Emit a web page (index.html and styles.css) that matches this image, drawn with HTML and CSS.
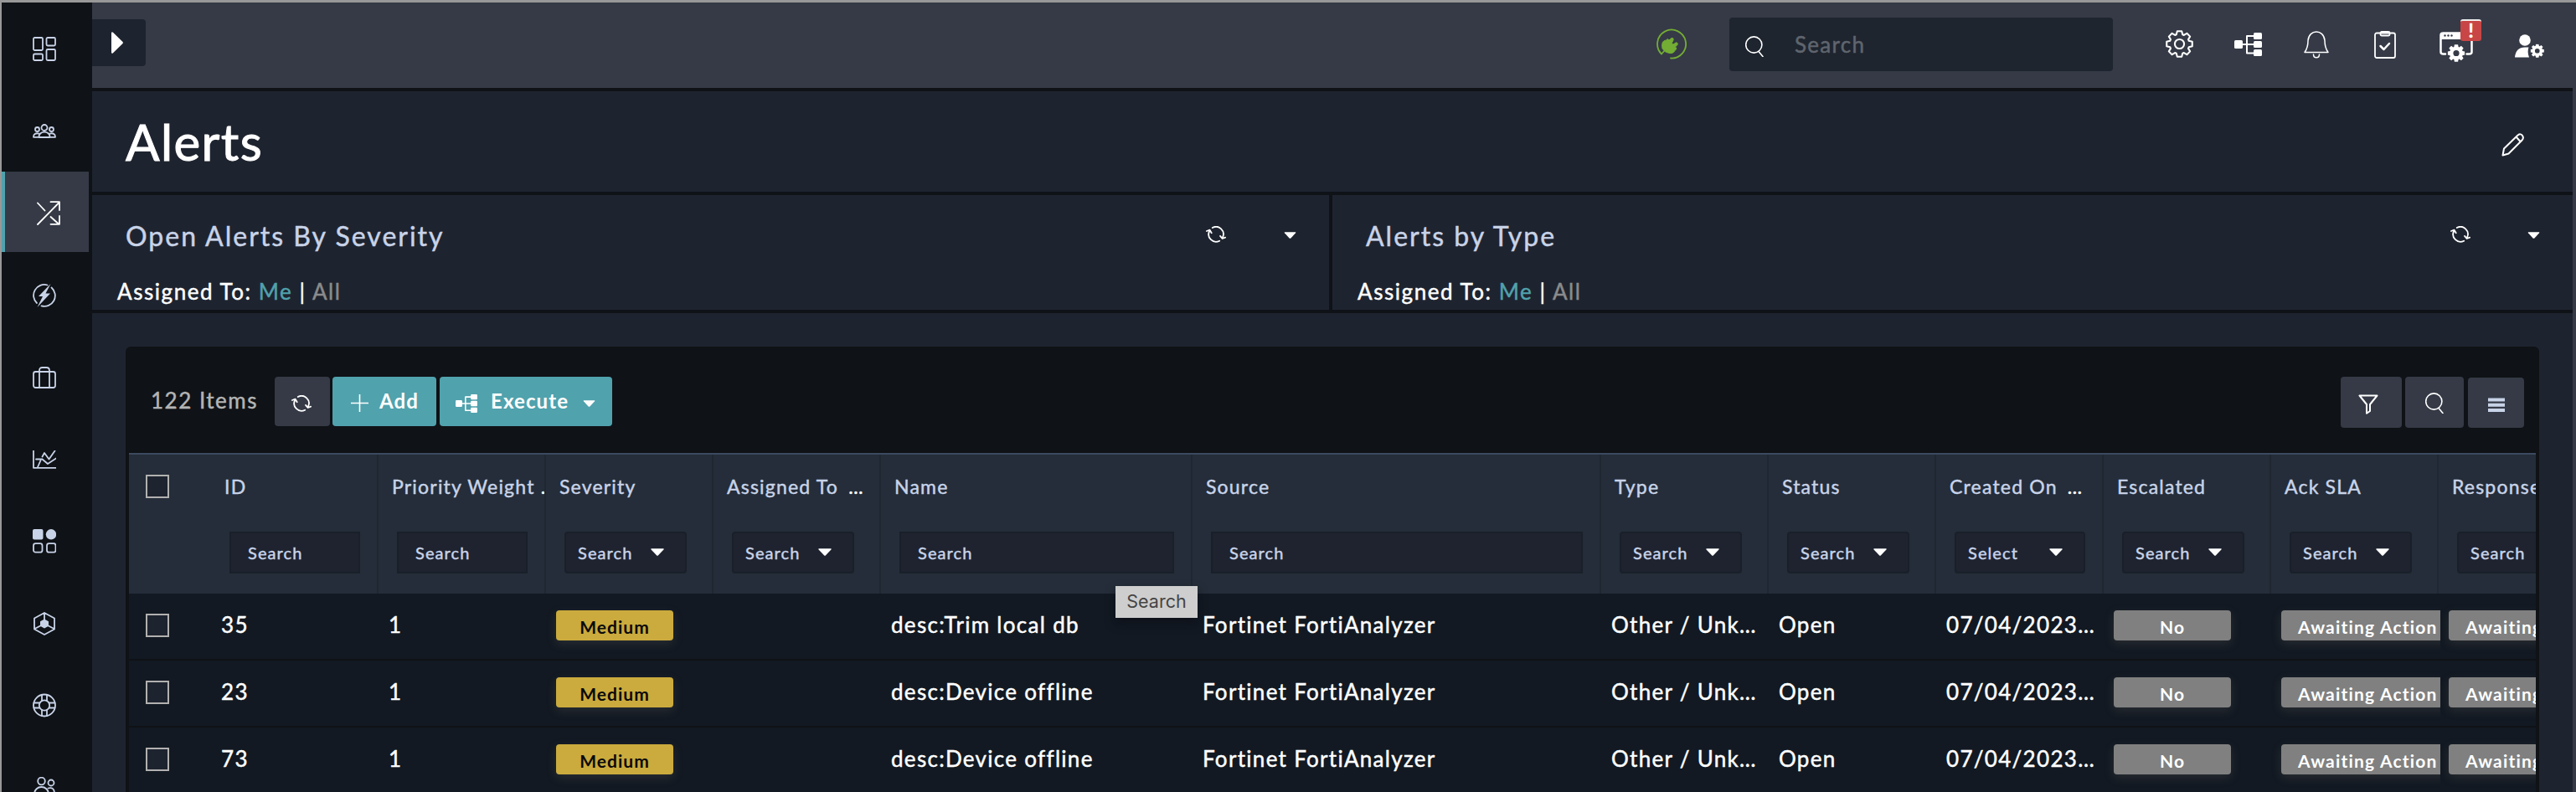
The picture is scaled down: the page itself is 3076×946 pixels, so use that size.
FILE: index.html
```html
<!DOCTYPE html>
<html lang="en">
<head>
<meta charset="utf-8">
<title>Alerts</title>
<link rel="stylesheet" href="styles.css">
</head>
<body>
<svg class="defs" width="0" height="0">
  <symbol id="gear" viewBox="-16 -16 32 32"><path d="M2.6-14.8 3.6-10.9 5.2-10.2 8.6-12.3 12.3-8.6 10.2-5.2 10.9-3.6 14.8-2.6V2.6L10.9 3.6 10.2 5.2 12.3 8.6 8.6 12.3 5.2 10.2 3.6 10.9 2.6 14.8H-2.6L-3.6 10.9-5.2 10.2-8.6 12.3-12.3 8.6-10.2 5.2-10.9 3.6-14.8 2.6V-2.6L-10.9-3.6-10.2-5.2-12.3-8.6-8.6-12.3-5.2-10.2-3.6-10.9-2.6-14.8Z"/><circle r="5.4"/></symbol>
  <symbol id="cog" viewBox="-16 -16 32 32"><path fill-rule="evenodd" d="M3.2-15.6 4-11.4 5.6-10.8 9-13.2 13.2-9 10.8-5.6 11.4-4 15.6-3.2V3.2L11.4 4 10.8 5.6 13.2 9 9 13.2 5.6 10.8 4 11.4 3.2 15.6H-3.2L-4 11.4-5.6 10.8-9 13.2-13.2 9-10.8 5.6-11.4 4-15.6 3.2V-3.2L-11.4-4-10.8-5.6-13.2-9-9-13.2-5.6-10.8-4-11.4-3.2-15.6ZM5.5 0A5.5 5.5 0 1 0-5.5 0 5.5 5.5 0 1 0 5.5 0Z"/></symbol>
  <symbol id="refresh" viewBox="0 0 24 20"><path d="M7.800 2A8.800 8.800 0 0 1 20 13.500M16.200 17.700A8.800 8.800 0 0 1 4.200 6M.9 6 4.600 4.600 6.700 8.200M23.100 13.600 19.600 15 17 11.900"/></symbol>
  <symbol id="tree" viewBox="0 0 33 28"><g fill="currentColor" stroke="none"><rect y="9" width="10" height="10" rx="1.5"/><rect x="23" width="10" height="8" rx="1.5"/><rect x="23" y="10" width="10" height="8" rx="1.5"/><rect x="23" y="20" width="10" height="8" rx="1.5"/></g><path d="M9 14H24M24 4H15V24.500H24"/></symbol>
  <symbol id="glass" viewBox="0 0 22 25"><circle cx="10.300" cy="10.500" r="9.600"/><path d="M16 18.500 21 24.500"/></symbol>
  <symbol id="caret" viewBox="0 0 16 9"><path d="M1 .2H15Q16.300.3 15.400 1.400L9 8.300Q8 9.300 7 8.300L.6 1.400Q-.3.3 1 .2Z"/></symbol>
</svg>
<div class="app">
  <nav class="sidebar">
    <a class="nav"><svg width="28" height="29"><rect x="1" y="1" width="11" height="15" rx="1.500"/><rect x="1" y="20.500" width="11" height="7.500" rx="1.500"/><rect x="16.500" y="1" width="10.500" height="9.500" rx="1.500"/><rect x="16.500" y="15" width="10.500" height="13" rx="1.500"/></svg></a>
    <a class="nav"><svg width="28" height="17"><circle cx="14" cy="4.500" r="3.500"/><circle cx="5.500" cy="6.500" r="2.500"/><circle cx="22.500" cy="6.500" r="2.500"/><path d="M7.500 16C7 7.500 21 7.500 20.500 16ZM7.500 15.800H1C.8 12 4 10.600 7.500 11.600M20.500 15.800H27C27.200 12 24 10.600 20.500 11.600"/></svg></a>
    <a class="nav active"><svg width="28" height="29"><path d="M1 28 27 1.500M16.500 1.200H27V11M1 2.500 9.500 11.500M16.500 19 26 27.500M27 18V27.800H16.500"/></svg></a>
    <a class="nav"><svg width="28" height="28"><path d="M17.500 1.500A12.800 12.800 0 0 0 5 23M10.500 26.400A12.800 12.800 0 0 0 22.500 4.500"/><path class="fill" d="M21.500 0 7 15H12L5.500 28 21 11.500H15.500Z"/></svg></a>
    <a class="nav"><svg width="28" height="26"><rect x="1" y="6" width="26" height="19" rx="2.500"/><path d="M8 25V4.500Q8 1 11.500 1H16.500Q20 1 20 4.500V25"/></svg></a>
    <a class="nav"><svg width="28" height="22"><path d="M1 0V20.800H28M4 10.500H11.500L18 16 28 9.500M6 20 9.500 12M11.500 7.500 14 3 19.500 10.500 26.500.5"/></svg></a>
    <a class="nav"><svg width="28" height="29"><rect class="fill" width="12.500" height="12.500" rx="2"/><circle class="fill" cx="22" cy="6.300" r="6.200"/><rect x="1" y="17.200" width="10.500" height="10.500" rx="2.500"/><rect x="17" y="17.200" width="10.500" height="10.500" rx="2.500"/></svg></a>
    <a class="nav"><svg width="26" height="28"><path d="M13 1 25 7.500V20.500L13 27 1 20.500V7.500ZM13 1V13M1.500 20 12 14.500M24.500 20 14 14.500"/><path class="fill" d="M13 8.500 18 11.200V16.800L13 19.500 8 16.800V11.200Z"/></svg></a>
    <a class="nav"><svg width="28" height="29"><circle cx="14" cy="14.500" r="13"/><circle cx="14" cy="14.500" r="6.200"/><path d="M11 2V9M17 2V9M11 20V27M17 20V27M1.500 11.500H8.500M1.500 17.500H8.500M19.500 11.500H26.500M19.500 17.500H26.500"/></svg></a>
    <a class="nav"><svg width="26" height="22"><circle cx="9.500" cy="5" r="4.300"/><circle cx="21" cy="7" r="3.500"/><path d="M1 21C1 9 18 9 18 21M17.500 13.500Q25 11.500 25 20"/></svg></a>
  </nav>
  <div class="main">
    <header class="topbar">
      <button class="toggle"><svg width="14" height="26"><path d="M0 1.500Q.3-.5 2 .8L13.500 12Q14.300 13 13.500 14L2 25.200Q.3 26.500 0 24.500Z"/></svg></button>
      <svg class="plug" width="37" height="37"><path d="M18 35.500A17 17 0 1 0 7 30.500L11 26"/><path class="leaf" d="M8 24Q6 14 13 14L14 12.500 16 14 19 11.500Q22 11 21 14L19 18 21 19 24.500 16.800Q27 17 26 19.500L23.500 22 25 24 23 26.500Q20 32 12 28Z"/></svg>
      <label class="search"><svg width="22" height="25"><use href="#glass"/></svg><span>Search</span></label>
      <div class="tools">
        <svg class="t-gear" width="33" height="33"><use href="#gear"/></svg>
        <svg class="t-tree" width="33" height="28"><use href="#tree"/></svg>
        <svg class="t-bell" width="30" height="33"><path d="M1 25.500Q5 20 5 11.500C6-2.500 24-2.500 25 11.500Q25 20 29 25.500ZM11.500 28C11.500 33 18.500 33 18.500 28"/></svg>
        <svg class="t-clip" width="26" height="33"><rect x="1" y="2.500" width="24" height="29.500" rx="2"/><rect x="7.500" y="1" width="11" height="4.500" rx="1.500"/><path class="tick" d="M7.500 18 11.500 22 18 15"/></svg>
        <span class="t-win"><svg width="40" height="36"><path class="frame" d="M7 26.500H4.500Q1.500 26.500 1.500 24V4Q1.500 1.500 4.500 1.500H38.500V24Q38.500 26.500 35.500 26.500H32.500"/><path class="solid" d="M1 1H39V9H1Z"/><g class="dots"><circle cx="6.500" cy="4.500" r="1.200"/><circle cx="10.500" cy="4.500" r="1.200"/><circle cx="14.500" cy="4.500" r="1.200"/></g><use class="solid" href="#cog" x="9.500" y="15" width="21" height="21"/></svg><b class="alert">!</b></span>
        <svg class="t-user" width="35" height="28"><circle class="solid" cx="12" cy="7" r="6.800"/><path class="solid" d="M0 27.500Q1 15.500 12 15.500H16.500Q14.500 21 17 27.500Z"/><use class="solid" href="#cog" x="18.500" y="11.500" width="16.500" height="16.500"/></svg>
      </div>
    </header>
    <section class="title"><h1>Alerts</h1><svg width="27" height="28"><path d="M1.500 26.500 3 18.500 19.500 2.500Q23 0 25 3T24.500 8.500L8.500 24.500ZM17.500 4.500 22.500 10"/></svg></section>
    <section class="widgets">
      <article class="widget">
        <div class="whead"><h2>Open Alerts By Severity</h2><svg class="line" width="24" height="20"><use href="#refresh"/></svg><svg class="wcaret" width="15" height="8"><use href="#caret"/></svg></div>
        <p>Assigned To: <a class="me">Me</a> | <a class="all">All</a></p>
      </article>
      <article class="widget">
        <div class="whead"><h2>Alerts by Type</h2><svg class="line" width="24" height="20"><use href="#refresh"/></svg><svg class="wcaret" width="15" height="8"><use href="#caret"/></svg></div>
        <p>Assigned To: <a class="me">Me</a> | <a class="all">All</a></p>
      </article>
    </section>
    <section class="panel">
      <div class="bar">
        <span class="count">122 Items</span>
        <button class="btn reload"><svg class="line" width="24" height="20"><use href="#refresh"/></svg></button>
        <button class="btn add"><svg width="21" height="21"><path d="M10.500 0V21M0 10.500H21"/></svg>Add</button>
        <button class="btn exec"><svg width="26" height="22"><use href="#tree"/></svg>Execute<svg class="solid" width="15" height="8"><use href="#caret"/></svg></button>
        <button class="btn sq filter"><svg width="24" height="24"><path d="M1.500 1.500H22.500L14 12V20L10 22.800V12Z"/></svg></button>
        <button class="btn sq find"><svg width="22" height="25"><use href="#glass"/></svg></button>
        <button class="btn sq menu"><svg width="20" height="18"><path d="M0 2.500H20M0 8.800H20M0 15H20"/></svg></button>
      </div>
      <div class="table">
        <div class="row head">
          <div><i class="check"></i></div>
          <div><h3>ID</h3><span class="input">Search</span></div>
          <div><h3>Priority Weight <em>.</em></h3><span class="input">Search</span></div>
          <div><h3>Severity</h3><span class="select">Search<svg width="16" height="9"><use href="#caret"/></svg></span></div>
          <div><h3>Assigned To <em class="more">…</em></h3><span class="select">Search<svg width="16" height="9"><use href="#caret"/></svg></span></div>
          <div><h3>Name</h3><span class="input">Search</span></div>
          <div><h3>Source</h3><span class="input">Search</span></div>
          <div><h3>Type</h3><span class="select">Search<svg width="16" height="9"><use href="#caret"/></svg></span></div>
          <div><h3>Status</h3><span class="select">Search<svg width="16" height="9"><use href="#caret"/></svg></span></div>
          <div><h3>Created On <em class="more">…</em></h3><span class="select wide">Select<svg width="16" height="9"><use href="#caret"/></svg></span></div>
          <div><h3>Escalated</h3><span class="select">Search<svg width="16" height="9"><use href="#caret"/></svg></span></div>
          <div><h3>Ack SLA</h3><span class="select">Search<svg width="16" height="9"><use href="#caret"/></svg></span></div>
          <div><h3>Response</h3><span class="select">Search<svg width="16" height="9"><use href="#caret"/></svg></span></div>
        </div>
        <div class="row"><div><i class="check"></i></div><div>35</div><div>1</div><div><b class="tag medium">Medium</b></div><div></div><div>desc:Trim local db</div><div>Fortinet FortiAnalyzer</div><div>Other / Unk…</div><div>Open</div><div>07/04/2023…</div><div><b class="tag">No</b></div><div><b class="tag">Awaiting Action</b></div><div><b class="tag">Awaiting Action</b></div></div>
        <div class="row"><div><i class="check"></i></div><div>23</div><div>1</div><div><b class="tag medium">Medium</b></div><div></div><div>desc:Device offline</div><div>Fortinet FortiAnalyzer</div><div>Other / Unk…</div><div>Open</div><div>07/04/2023…</div><div><b class="tag">No</b></div><div><b class="tag">Awaiting Action</b></div><div><b class="tag">Awaiting Action</b></div></div>
        <div class="row"><div><i class="check"></i></div><div>73</div><div>1</div><div><b class="tag medium">Medium</b></div><div></div><div>desc:Device offline</div><div>Fortinet FortiAnalyzer</div><div>Other / Unk…</div><div>Open</div><div>07/04/2023…</div><div><b class="tag">No</b></div><div><b class="tag">Awaiting Action</b></div><div><b class="tag">Awaiting Action</b></div></div>
      </div>
    </section>
  </div>
  <div class="tooltip">Search</div>
</div>
</body>
</html>
```
FILE: styles.css
```css
* { box-sizing: border-box; }
body { margin: 0; background: #1e242f; font-family: Lato, sans-serif; letter-spacing: 1.3px; -webkit-text-stroke: .45px currentColor; color: #fff; overflow: hidden; }
h1, h2, h3, p { margin: 0; font-weight: 400; }
em, i { font-style: normal; }
button { border: 0; padding: 0; font: inherit; letter-spacing: inherit; color: inherit; }
svg { display: block; flex: none; fill: none; stroke: currentColor; stroke-width: 2; stroke-linecap: round; stroke-linejoin: round; }
.defs { position: absolute; }
.solid { fill: currentColor; stroke: none; }

.app { position: relative; display: flex; height: 946px; border-top: 3px solid #989898; border-left: 2px solid #989898; overflow: hidden; }
.sidebar { width: 108px; flex: none; background: #0f1216; padding-top: 6px; color: #c8d3e8; }
.nav { display: flex; align-items: center; justify-content: center; width: 104px; height: 96px; margin-bottom: 2px; padding: 3px 2px 0 0; }
.nav svg { stroke-width: 1.800; }
.nav .fill { fill: currentColor; stroke: none; }
.nav.active { background: #353a46; border-left: 4px solid #50a2ad; color: #fff; padding: 3px 0 0 4px; }
.nav:last-child { padding-top: 0; }

.main { flex: 1; min-width: 0; border-right: 4px solid #353a46; display: flex; flex-direction: column; }
.topbar { height: 106px; flex: none; background: #353a46; border-bottom: 4px solid #0f1216; display: flex; }
.toggle { width: 64px; height: 56px; margin-top: 20px; padding-left: 23px; background: #1e242f; border-radius: 0 4px 4px 0; display: flex; align-items: center; }
.toggle svg { fill: #fff; stroke: none; margin-top: -1px; }
.plug { margin: 31px 51px 0 auto; color: #73ad34; stroke-width: 1.800; }
.leaf { fill: #73ad34; stroke-width: 1; }
.search { width: 458px; height: 64px; margin-top: 18px; background: #1e252f; border-radius: 4px; display: flex; align-items: center; padding-left: 19px; gap: 37px; font-size: 26px; }
.search span { color: #60656e; }
.search svg { stroke-width: 1.600; margin-top: 4px; }
.tools { display: flex; width: 549px; padding-left: 63px; }
.tools > * { flex: none; }
.t-gear { margin: 33px 49px 0 0; }
.t-tree { margin: 36px 50px 0 0; }
.t-bell { margin: 34px 54px 0 0; stroke-width: 1.500; }
.t-clip { margin: 34px 52px 0 0; stroke-width: 1.800; }
.tick { stroke-width: 2.500; }
.t-win { position: relative; width: 40px; margin: 35px 50px 0 0; }
.frame { stroke-width: 2.500; }
.dots { fill: #353a46; stroke: none; }
.alert { position: absolute; left: 25px; top: -15px; width: 25px; height: 26px; background: #c84645; border-top: 2px solid #eee; border-radius: 3px; font-size: 22px; line-height: 23px; text-align: center; letter-spacing: 0; }
.t-user { margin-top: 38px; }

.title { height: 124px; flex: none; padding: 0 58px 0 40px; border-bottom: 4px solid #0f1216; display: flex; align-items: center; justify-content: space-between; }
.title h1 { font-size: 60px; line-height: 72px; letter-spacing: 1.400px; -webkit-text-stroke-width: 1px; }
.title svg { margin-top: 7px; }
.widgets { height: 141px; flex: none; display: flex; border-bottom: 4px solid #0f1216; }
.widget { flex: 1; padding: 30px 39px 0 40px; }
.widget:first-child { flex: 0 0 1481px; border-right: 4px solid #0f1216; }
.whead { display: flex; height: 38px; }
.whead h2 { flex: 1; font-size: 32px; line-height: 38px; color: #c8d3e8; letter-spacing: 2px; }
.whead .line { margin: 7px 68px 0 0; }
.wcaret { margin-top: 14px; fill: #fff; stroke: none; }
.widget:first-child .line { margin-right: 69px; }
.line { stroke-width: 1.800; }
.widget p { margin: 31px 0 0 -10px; font-size: 26px; line-height: 32px; letter-spacing: 1.550px; }
.me { color: #50a2ad; }
.all { color: #8b8b8b; }

.panel { flex: 1; margin: 40px 40px 0; background: #0f1216; border-radius: 6px 6px 0 0; padding: 0 4px; min-height: 0; }
.bar { height: 127px; padding: 36px 14px 0 26px; display: flex; align-items: flex-start; }
.count { width: 148px; font-size: 26px; line-height: 56px; color: #b4b4b4; letter-spacing: 1.500px; }
.btn { height: 59px; border-radius: 4px; display: flex; align-items: center; background: #353a46; font-size: 24px; font-weight: 700; letter-spacing: 1.100px; padding-bottom: 2px; -webkit-text-stroke-width: 0; }
.reload { width: 66px; margin-right: 3px; padding: 5px 0 0 20px; }
.add, .exec { background: #50a2ad; }
.add { width: 124px; margin-right: 4px; padding-left: 22px; gap: 13px; }
.add svg { stroke-width: 1.600; margin-top: 6px; }
.exec { width: 206px; padding-left: 19px; }
.exec svg:first-child { margin: 6px 16px 0 0; }
.exec .solid { margin: 6px 20px 0 auto; }
.sq { height: 61px; }
.filter { width: 73px; margin: 0 4px 0 auto; padding: 5px 0 0 21px; }
.find { width: 70px; margin-right: 5px; padding: 2px 0 0 24px; }
.find svg { stroke-width: 1.600; }
.menu { width: 67px; height: 60px; margin-top: 1px; padding: 5px 0 0 24px; color: #c8d3e8; }
.menu svg { stroke-width: 4; stroke-linecap: butt; }

.table { overflow: hidden; }
.row { display: grid; grid-template-columns: 98px 200px 200px 200px 200px 372px 488px 200px 200px 200px 200px 200px 200px; height: 80px; background: #121922; border-bottom: 2px solid #0f1216; font-size: 26px; }
.row > div { padding: 0 0 4px 12px; margin-right: -2px; line-height: 75px; white-space: nowrap; overflow: hidden; }
.row > div:first-child { padding: 24px 0 0 20px; }
.check { display: block; width: 28px; height: 28px; background: #1e242f; border: 2px solid #b2b1b0; }
.tag { display: block; width: 140px; height: 36px; margin-top: 20px; padding-top: 2px; border-radius: 4px; background: #808080; box-shadow: 0 4px 12px rgba(128, 120, 110, .22); font-size: 21px; line-height: 35px; letter-spacing: 1.050px; text-align: center; -webkit-text-stroke-width: 0; }
.row > div:nth-child(n+12) .tag { width: 206px; padding-left: 20px; text-align: left; letter-spacing: 1.200px; }
.medium { background: #cbab3d; color: #0a0a0a; }
.head { height: 168px; background: #242d39; border-top: 2px solid #3c4a60; border-bottom: 0; }
.head > div { margin: 0; padding: 24px 22px 0; border-right: 2px solid #1f2731; line-height: normal; }
.head > div:first-child { border: 0; }
.head h3 { margin: 0 -22px 0 -6px; font-size: 23px; line-height: 28px; color: #c8d3e8; letter-spacing: 1.200px; }
.head em { color: #fff; }
.head .more { margin-left: 5px; }
.input, .select { display: flex; align-items: center; height: 50px; margin: 40px -2px 0 0; padding-left: 20px; background: #1e232f; border: 2px solid #1a2029; font-size: 20px; color: #c8d3e8; letter-spacing: 1.100px; }
.select { width: 146px; padding: 0 25px 0 14px; border-radius: 4px; justify-content: space-between; }
.select.wide { width: 156px; }
.select svg { fill: #fff; stroke: none; margin-bottom: 2px; }
.tooltip { position: absolute; left: 1330px; top: 697px; width: 98px; height: 38px; background: #cecece; box-shadow: 0 6px 12px rgba(10, 10, 20, .5); color: #454545; font: 21.500px/37px Inter, sans-serif; letter-spacing: 0; text-align: center; -webkit-text-stroke-width: 0; }
```
